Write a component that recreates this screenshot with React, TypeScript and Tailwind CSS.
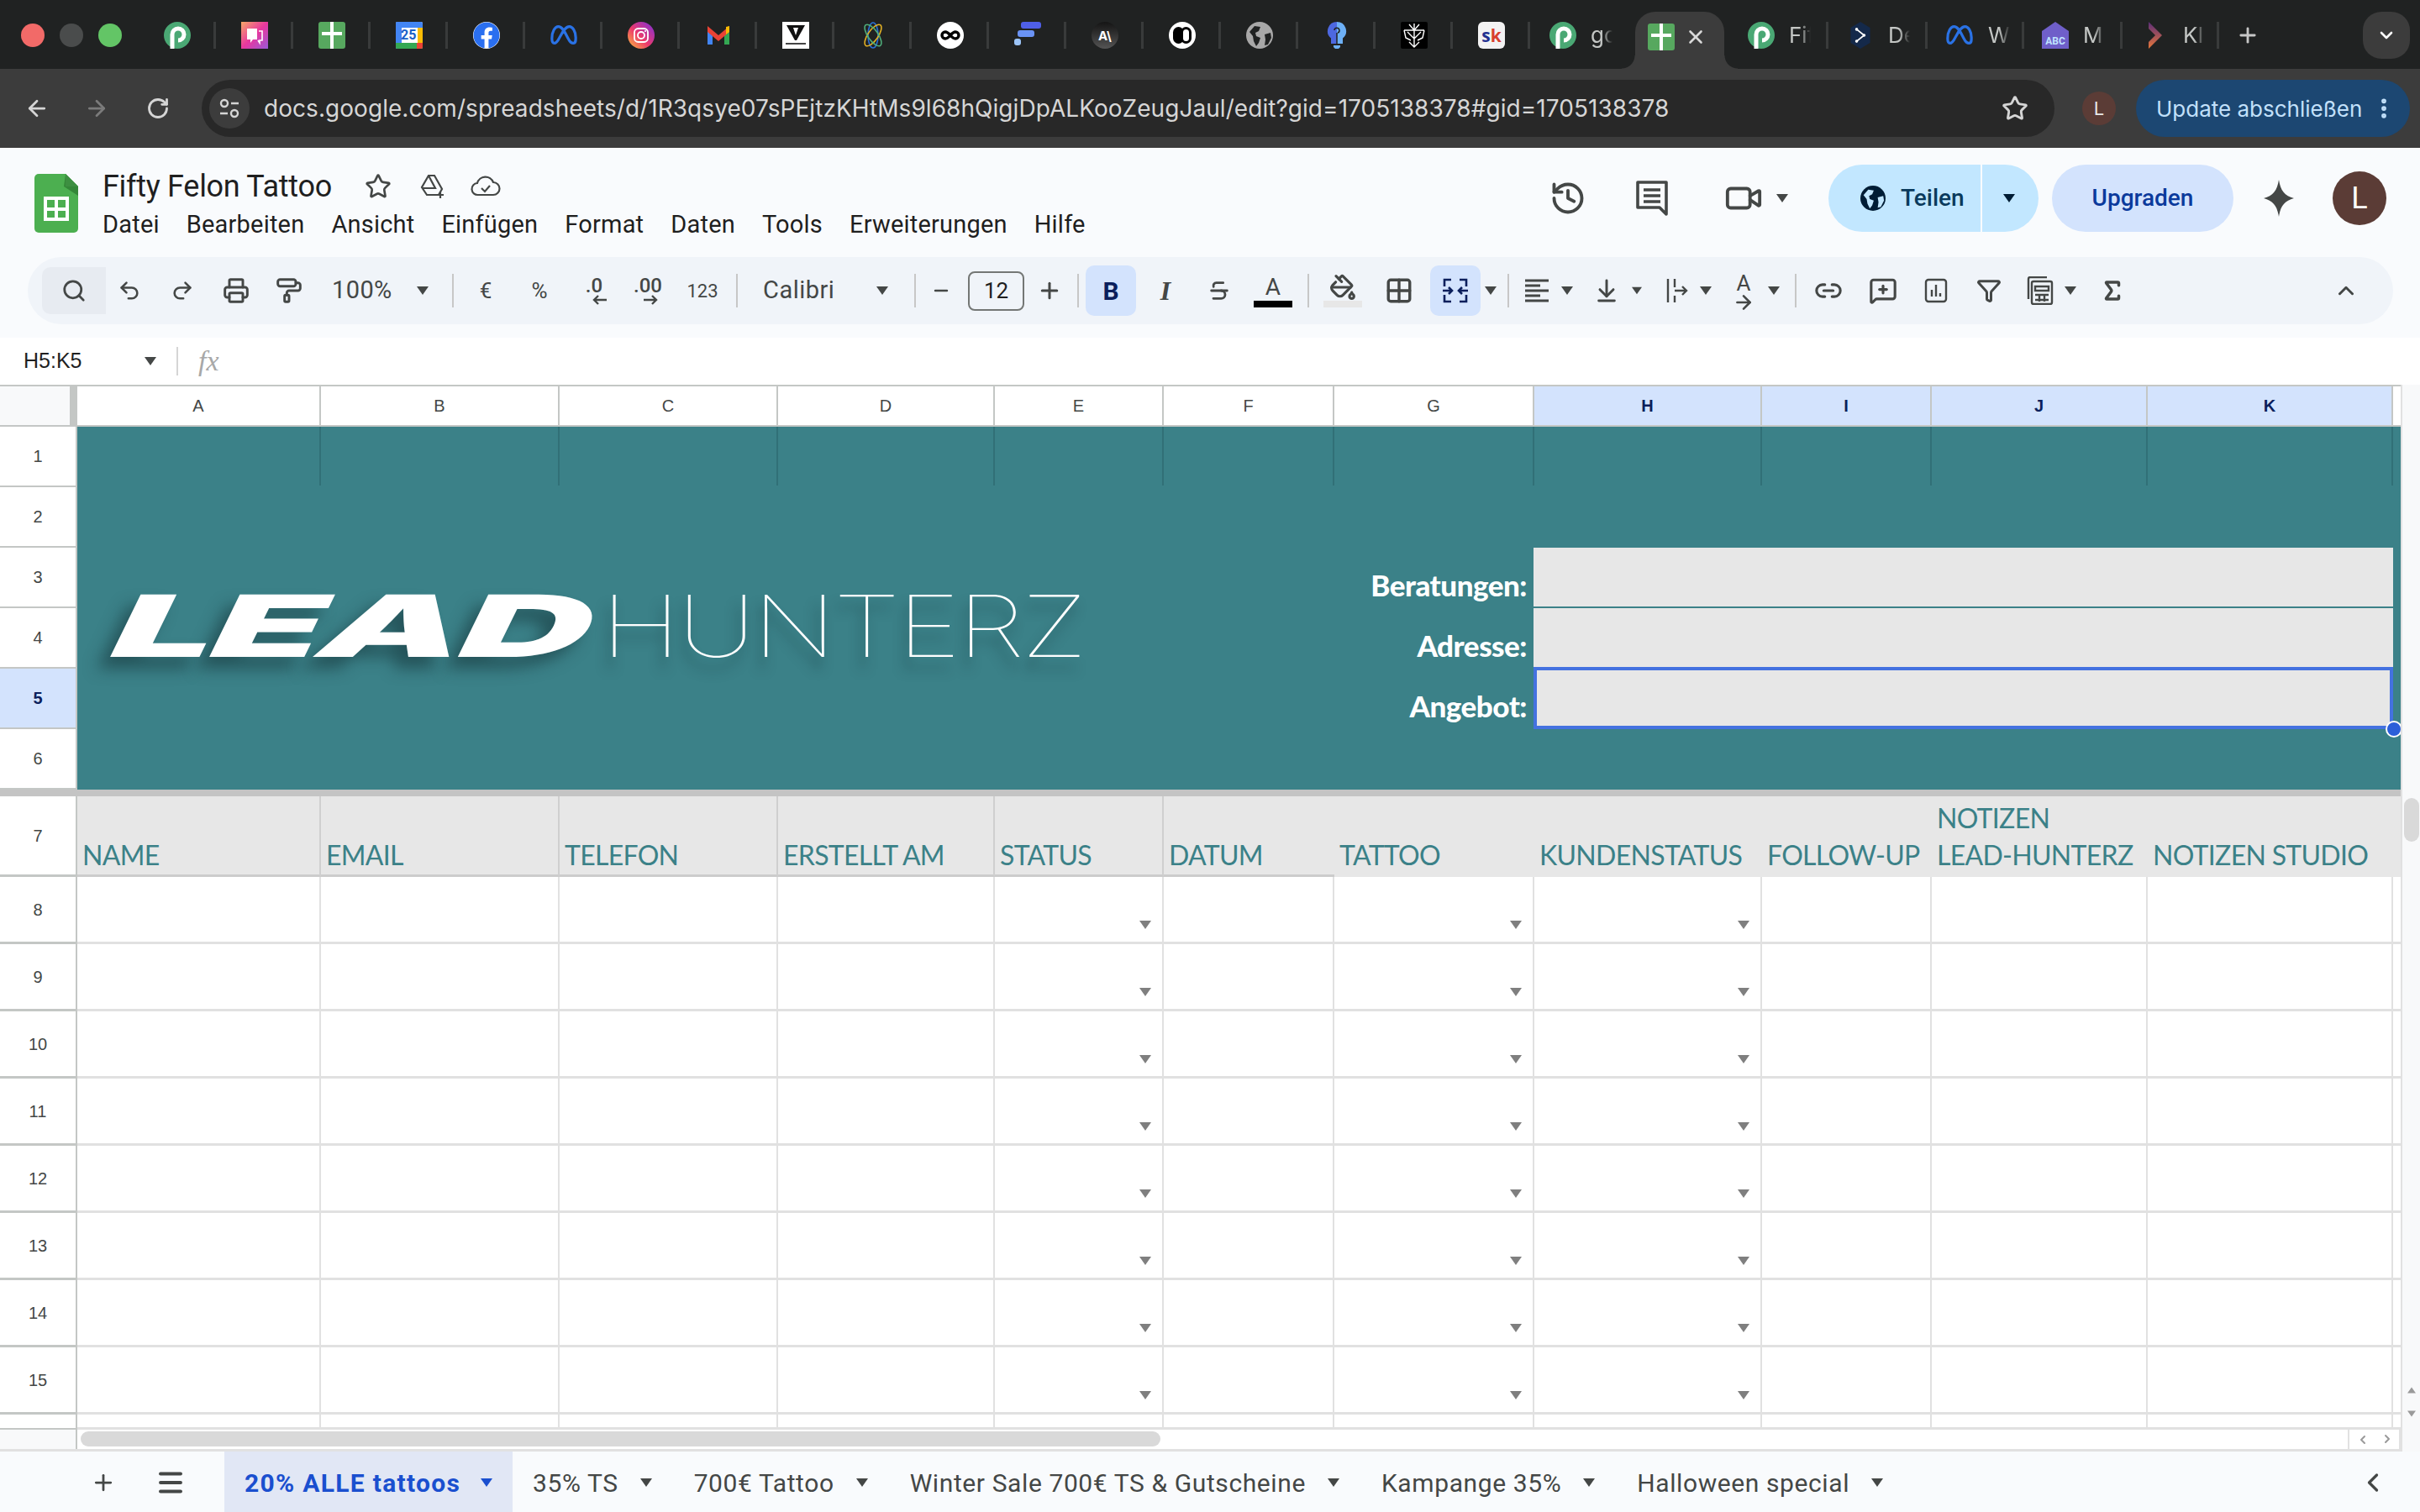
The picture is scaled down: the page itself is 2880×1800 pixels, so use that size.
import type { ReactNode } from 'react'
import {
  ArrowLeft, ArrowRight, RotateCw, Star, Search, Undo2, Redo2, Printer, PaintRoller,
  Minus, Plus, Strikethrough, PaintBucket, Grid2x2, ArrowDownToLine, Link2,
  MessageSquarePlus, Funnel, Sigma, ChevronUp, ChevronDown, ChevronLeft, History, Video,
  X, Menu, Infinity as InfinityIcon, EllipsisVertical, ArrowRight as Arrow,
} from 'lucide-react'
import { FaFacebook } from 'react-icons/fa'

const ROWS = [8, 9, 10, 11, 12, 13, 14, 15]
const COLS = ['A', 'B', 'C', 'D', 'E', 'F', 'G', 'H', 'I', 'J', 'K']
const SELECTED_COLS = ['H', 'I', 'J', 'K']
const DROPDOWN_COLS = ['E', 'G', 'H']
const SHEET_GRID = 'grid shrink-0 grid-cols-[92px_290px_284px_260px_258px_201px_203px_238px_271px_202px_257px_292px_9px]'

function Caret({ className = 'text-[#444746]' }: { className?: string }) {
  return (
    <svg viewBox="0 0 14 10" className={`w-[14px] h-[10px] ${className}`} aria-hidden="true">
      <path d="M0 0h14L7 10z" fill="currentColor" />
    </svg>
  )
}

function SolidGlobe({ size, bg, fg }: { size: string; bg: string; fg: string }) {
  return (
    <svg viewBox="0 0 32 32" className={size}>
      <circle cx="16" cy="16" r="16" fill={bg} />
      <path d="M4 12l6-7 7 1-2 5-4 2 1 4 5 2-2 6-3 4-3-6-1-6zM22 15l7-2 1 6-4 8-4 1 1-7z" fill={fg} />
    </svg>
  )
}

/* ---- favicons ---- */
function PIcon() {
  return (
    <svg viewBox="0 0 32 32" className="w-8 h-8 shrink-0">
      <circle cx="16" cy="16" r="16" fill="#4aa874" />
      <path d="M10 32V15a7 7 0 1 1 7 7" fill="none" stroke="#fff" strokeWidth="5" />
    </svg>
  )
}
function SheetsFav() {
  return (
    <div className="w-8 h-8 shrink-0 rounded-[3px] bg-[#57a85f] relative">
      <div className="absolute left-[14px] top-0 w-1 h-full bg-white" />
      <div className="absolute left-1 right-1 top-[12px] h-1 bg-white" />
    </div>
  )
}
function MetaIcon() {
  return (
    <svg viewBox="0 0 36 32" className="w-[34px] h-8 shrink-0" fill="none" stroke="#2a72e5" strokeWidth="3.4">
      <path d="M3 20C3 11 7 5 11 5c6 0 9 9 13 16 2 4 4 5 6 5 3 0 3-3 3-7 0-8-4-14-8-14-6 0-10 10-13 15-2 4-4 6-6 6-3 0-3-3-3-6z" />
    </svg>
  )
}
function Fav({ children }: { children: ReactNode }) {
  return <div className="w-[92px] h-8 shrink-0 flex items-center justify-center pl-[3px] relative border-r-[3px] border-[#393b3b]">{children}</div>
}

function Favicons() {
  return (
    <>
      <Fav><PIcon /></Fav>
      <Fav>
        <svg viewBox="0 0 32 32" className="w-8 h-8">
          <defs>
            <linearGradient id="chat" x1="0" y1="0" x2="1" y2="1">
              <stop offset="0" stopColor="#f7a868" /><stop offset=".5" stopColor="#e8379e" /><stop offset="1" stopColor="#9a5ad8" />
            </linearGradient>
          </defs>
          <rect width="32" height="32" fill="url(#chat)" />
          <path d="M7 8h12v13h-5l-3 4v-4H7z" fill="#fff" />
          <path d="M21 11h4v11h-3v3l-2-3" fill="none" stroke="#fff" strokeWidth="1.6" />
        </svg>
      </Fav>
      <Fav><SheetsFav /></Fav>
      <Fav>
        <div className="w-8 h-8 relative bg-white rounded-[2px] overflow-hidden">
          <div className="absolute inset-x-0 top-0 h-[7px] bg-[#4285f4]" />
          <div className="absolute left-0 top-0 bottom-0 w-[7px] bg-[#4285f4]" />
          <div className="absolute right-0 top-[7px] bottom-[7px] w-[6px] bg-[#fbbc04]" />
          <div className="absolute inset-x-0 bottom-0 h-[7px] bg-[#34a853]" />
          <div className="absolute right-0 bottom-0 w-[7px] h-[7px] bg-[#ea4335]" />
          <span className="absolute left-[6px] top-[6px] text-[16px] leading-[20px] font-bold text-[#1a5fc8] font-['Roboto']">25</span>
        </div>
      </Fav>
      <Fav><FaFacebook className="w-8 h-8 text-[#2a6ff0] bg-white rounded-full" /></Fav>
      <Fav><MetaIcon /></Fav>
      <Fav>
        <svg viewBox="0 0 32 32" className="w-8 h-8">
          <defs>
            <linearGradient id="ig" x1="0" y1="1" x2="1" y2="0">
              <stop offset="0" stopColor="#fdc13c" /><stop offset=".45" stopColor="#ec3a6b" /><stop offset="1" stopColor="#7a2ee0" />
            </linearGradient>
          </defs>
          <circle cx="16" cy="16" r="16" fill="url(#ig)" />
          <rect x="8" y="8" width="16" height="16" rx="4.5" fill="none" stroke="#fff" strokeWidth="1.8" />
          <circle cx="16" cy="16" r="4" fill="none" stroke="#fff" strokeWidth="1.8" />
          <circle cx="21" cy="11" r="1.1" fill="#fff" />
        </svg>
      </Fav>
      <Fav>
        <svg viewBox="0 0 32 32" className="w-8 h-8">
          <path d="M3 8v19h6V13z" fill="#4285f4" />
          <path d="M23 13v14h6V8z" fill="#34a853" />
          <path d="M3 5l13 11L29 5v7l-13 11L3 12z" fill="#ea4335" />
          <path d="M25 6l4-1v7l-4 3z" fill="#fbbc04" />
        </svg>
      </Fav>
      <Fav>
        <div className="w-8 h-8 bg-white flex flex-col items-center pt-1">
          <svg viewBox="0 0 24 18" className="w-6 h-[18px]"><path d="M1 0h22L13 18h-2z" fill="#111" /><path d="M9 3h6l-3 9z" fill="#fff" /></svg>
          <div className="w-6 h-[2px] mt-[3px] bg-[#444]" />
        </div>
      </Fav>
      <Fav>
        <svg viewBox="0 0 32 32" className="w-8 h-8" fill="none" strokeWidth="1.6">
          <ellipse cx="16" cy="16" rx="6" ry="15" stroke="#2a6fd6" />
          <ellipse cx="16" cy="16" rx="6" ry="15" stroke="#e2b125" transform="rotate(35 16 16)" />
          <ellipse cx="16" cy="16" rx="6" ry="15" stroke="#4fae7b" transform="rotate(-35 16 16)" />
        </svg>
      </Fav>
      <Fav>
        <div className="w-8 h-8 bg-white rounded-full flex items-center justify-center">
          <InfinityIcon size={24} strokeWidth={3.4} className="text-black" />
        </div>
      </Fav>
      <Fav>
        <div className="w-8 h-8 flex flex-col gap-[2px]">
          <div className="w-6 h-2 ml-2 rounded-[3px] bg-[#4f5fe8]" />
          <div className="w-5 h-2 ml-1 rounded-[3px] bg-[#6a93f5]" />
          <div className="w-2 h-2 rounded-[3px] bg-[#9cc4f7]" />
        </div>
      </Fav>
      <Fav>
        <div className="w-8 h-8 rounded-full bg-gradient-to-b from-[#151515] to-[#555] flex items-center justify-center text-white text-[15px] leading-none font-bold font-['Inter']">A\</div>
      </Fav>
      <Fav>
        <div className="w-8 h-8 rounded-full bg-white relative overflow-hidden">
          <div className="absolute left-[5px] top-[6px] w-[13px] h-5 rounded-full bg-black" />
          <div className="absolute right-[5px] top-[6px] w-[13px] h-5 rounded-full border-[3px] border-black bg-white" />
        </div>
      </Fav>
      <Fav><SolidGlobe size="w-8 h-8" bg="#a8a8a8" fg="#202222" /></Fav>
      <Fav>
        <svg viewBox="0 0 32 32" className="w-8 h-8">
          <path d="M16 0a11 11 0 0 1 7 19.5V26h-7z" fill="#6db0f6" />
          <path d="M16 0a11 11 0 0 0-7 19.5V26h7z" fill="#4d68e0" />
          <path d="M12 28h8v2l-2 2h-4l-2-2z" fill="#6db0f6" />
          <path d="M16 26V13m-3-3a3 3 0 1 1 4 3" fill="none" stroke="#202222" strokeWidth="1.5" />
        </svg>
      </Fav>
      <Fav>
        <svg viewBox="0 0 32 32" className="w-8 h-8 bg-black rounded-[2px]" fill="none" stroke="#fff" strokeWidth="1.4">
          <path d="M16 2v28M10 3l6 7 6-7M4 10l12 0 12 0M4 10l2 9 6 3M28 10l-2 9-6 3M10 24l6 6 6-6M8 12l8 8 8-8" />
        </svg>
      </Fav>
      <Fav>
        <div className="w-8 h-8 rounded-[6px] bg-[#f3f3f3] flex items-center justify-center text-[21px] leading-none font-bold font-['Open_Sans']">
          <span className="text-[#22308f]">s</span><span className="text-[#d8402f]">k</span>
        </div>
      </Fav>
    </>
  )
}

function StripTab({ icon, label, className, sep = true }: { icon: ReactNode; label: string; className: string; sep?: boolean }) {
  return (
    <div className={`h-8 shrink-0 flex items-center ${sep ? 'border-r-[3px] border-[#393b3b]' : ''} ${className}`}>
      {icon}
      <span className="ml-[17px] w-[26px] overflow-hidden whitespace-nowrap text-[26px] leading-8 text-[#c4c7c5] font-['Inter'] [mask-image:linear-gradient(to_right,black_50%,transparent)]">{label}</span>
    </div>
  )
}

function TabStrip() {
  return (
    <div className="h-[82px] shrink-0 bg-[#202222] flex relative">
      <div className="flex items-center gap-[18px] pl-[25px] w-[165px] shrink-0 h-[84px]">
        <div className="w-7 h-7 rounded-full bg-[#f26a68]" />
        <div className="w-7 h-7 rounded-full bg-[#4a4c4c]" />
        <div className="w-7 h-7 rounded-full bg-[#63c566]" />
      </div>
      <div className="flex items-center h-[84px]">
        <Favicons />
        <StripTab icon={<PIcon />} label="go" className="w-[125px] pl-[23px]" sep={false} />
        {/* active tab */}
        <div className="relative w-[106px] h-[68px] mt-[14px] self-start rounded-t-[24px] bg-[#3c3c3c] flex items-center pl-[15px] pb-[8px]">
          <SheetsFav />
          <X size={26} strokeWidth={2.4} className="ml-[12px] text-[#d8d8d8]" />
          <span className="absolute -left-4 bottom-0 w-4 h-4 bg-[radial-gradient(circle_at_0_0,#202222_15px,#3c3c3c_16px)]" />
          <span className="absolute -right-4 bottom-0 w-4 h-4 bg-[radial-gradient(circle_at_100%_0,#202222_15px,#3c3c3c_16px)]" />
        </div>
        <StripTab icon={<PIcon />} label="Fif" className="w-[124px] pl-[28px]" />
        <StripTab
          icon={
            <svg viewBox="0 0 32 36" className="w-8 h-8 shrink-0">
              <path d="M16 0l13 8v20l-13 8-13-8V8z" fill="#14294a" />
              <path d="M11 10l10 8-10 8" fill="none" stroke="#fff" strokeWidth="2" />
              <circle cx="11" cy="10" r="2" fill="#fff" /><circle cx="21" cy="18" r="2" fill="#fff" /><circle cx="11" cy="26" r="2" fill="#fff" />
            </svg>
          }
          label="De"
          className="w-[118px] pl-[22px]"
        />
        <StripTab icon={<MetaIcon />} label="W" className="w-[115px] pl-[21px]" />
        <StripTab
          icon={
            <svg viewBox="0 0 32 32" className="w-8 h-8 shrink-0">
              <path d="M16 0l16 11v21H0V11z" fill="#6f5fc9" />
              <text x="16" y="27" fontSize="12" fontWeight="700" textAnchor="middle" fill="#bfe3ff" fontFamily="Roboto">ABC</text>
            </svg>
          }
          label="M"
          className="w-[117px] pl-[21px]"
        />
        <StripTab
          icon={
            <svg viewBox="0 0 32 32" className="w-8 h-8 shrink-0">
              <defs>
                <linearGradient id="ki" x1="0" y1="0" x2="0" y2="1">
                  <stop offset="0" stopColor="#5a2d7a" /><stop offset="1" stopColor="#e8773a" />
                </linearGradient>
              </defs>
              <path d="M8 0l16 16L8 32V24l8-8-8-8z" fill="url(#ki)" />
            </svg>
          }
          label="KI"
          className="w-[115px] pl-[23px]"
        />
        <Plus size={28} strokeWidth={2.4} className="ml-[20px] text-[#c7c7c7]" />
      </div>
      <div className="absolute right-3 top-[14px] w-14 h-14 rounded-[22px] bg-[#3c3c3c] flex items-center justify-center">
        <ChevronDown size={24} strokeWidth={2.6} className="text-white" />
      </div>
    </div>
  )
}

function Omnibox() {
  return (
    <div className="h-[94px] shrink-0 bg-[#3c3c3c] flex items-center pr-3 text-[#c7c7c7]">
      <div className="w-[240px] shrink-0 flex items-center">
        <ArrowLeft size={30} strokeWidth={2.2} className="ml-[29px] text-[#d5d5d5]" />
        <ArrowRight size={30} strokeWidth={2.2} className="ml-[41px] text-[#7b7b7b]" />
        <RotateCw size={28} strokeWidth={2.4} className="ml-[44px] text-[#d5d5d5]" />
      </div>
      <div className="w-[2205px] h-[68px] -mt-[1px] shrink-0 rounded-full bg-[#282828] flex items-center pl-[9px]">
        <div className="w-12 h-12 rounded-full bg-[#3c3c3c] flex items-center justify-center">
          <svg viewBox="0 0 26 26" className="w-[26px] h-[26px] text-[#d5d5d5]" fill="none" stroke="currentColor" strokeWidth="2.4">
            <circle cx="7" cy="7" r="4" />
            <path d="M15 7h9M2 19h9" />
            <circle cx="19" cy="19" r="4" />
          </svg>
        </div>
        <span className="ml-[17px] text-[28px] tracking-[0.05px] text-[#d6d6d6] font-['Inter'] whitespace-nowrap">
          docs.google.com/spreadsheets/d/1R3qsye07sPEjtzKHtMs9l68hQigjDpALKooZeugJaul/edit?gid=1705138378#gid=1705138378
        </span>
        <Star size={32} strokeWidth={2.2} className="ml-auto mr-[31px] text-[#d5d5d5]" />
      </div>
      <div className="ml-[33px] w-10 h-10 rounded-full bg-[#5b3c36] text-[#e8e8e8] text-[22px] flex items-center justify-center font-['Inter']">L</div>
      <div className="ml-[24px] w-[326px] h-[68px] rounded-full bg-[#1c4772] flex items-center pl-6 text-[#c2e0fa] font-['Inter'] text-[26px] whitespace-nowrap">
        Update abschließen
        <EllipsisVertical size={30} strokeWidth={2.6} className="ml-auto mr-[16px]" />
      </div>
    </div>
  )
}

function DocsLogo() {
  return (
    <svg viewBox="0 0 52 70" className="w-[52px] h-[70px] shrink-0">
      <path d="M5 0h32l15 15v50a5 5 0 0 1-5 5H5a5 5 0 0 1-5-5V5a5 5 0 0 1 5-5z" fill="#4caf50" />
      <path d="M37 0l15 15v11L35 15z" fill="#2e7d32" opacity=".8" />
      <path d="M37 0v15h15z" fill="#3d8f41" />
      <path d="M11 27h30v29H11zm4 4v9h9v-9zm13 0v9h9v-9zm-13 13v8h9v-8zm13 0v8h9v-8z" fill="#fff" fillRule="evenodd" />
    </svg>
  )
}

function DocHeader() {
  return (
    <div className="h-[130px] flex items-start pl-[41px] text-[#444746]">
      <div className="pt-[31px]"><DocsLogo /></div>
      <div className="ml-[29px] pt-[24px] font-['Roboto']">
        <div className="flex items-center h-[44px]">
          <span className="text-[36px] leading-[44px] tracking-[-0.3px] text-[#1f1f1f] whitespace-nowrap">Fifty Felon Tattoo</span>
          <Star size={32} strokeWidth={2} className="ml-[39px]" />
          <svg viewBox="0 0 32 32" className="ml-[32px] w-8 h-8" fill="none" stroke="currentColor" strokeWidth="2.2">
            <path d="M12 3h7l9 16-4 7H10l-6-9z" />
            <path d="M12 3l8 15H5" />
            <path d="M26 22v8m-4-4h8" stroke="currentColor" />
          </svg>
          <svg viewBox="0 0 36 32" className="ml-[30px] w-9 h-8" fill="none" stroke="currentColor" strokeWidth="2.2">
            <path d="M9 26a7 7 0 0 1-1-14 10 10 0 0 1 19-1 7.5 7.5 0 0 1 0 15z" />
            <path d="M13 18l4 4 6-7" />
          </svg>
        </div>
        <div className="flex gap-[32px] mt-[2px] text-[29px] leading-[42px] tracking-[0.2px] text-[#1f1f1f] whitespace-nowrap">
          {['Datei', 'Bearbeiten', 'Ansicht', 'Einfügen', 'Format', 'Daten', 'Tools', 'Erweiterungen', 'Hilfe'].map((m) => (
            <span key={m}>{m}</span>
          ))}
        </div>
      </div>

      {/* right side actions */}
      <div className="ml-auto mt-[20px] mr-[40px] h-20 flex items-center">
        <History size={44} strokeWidth={2.1} />
        <svg viewBox="0 0 40 44" className="ml-[58px] w-10 h-11" fill="none" stroke="currentColor" strokeWidth="3.6">
          <path d="M3 3h34v38l-8-8H3z" strokeLinejoin="round" />
          <path d="M10 12h20M10 19h20M10 26h20" />
        </svg>
        <Video size={46} strokeWidth={2} className="ml-[66px]" />
        <Caret className="ml-[16px] text-[#444746]" />
        <div className="ml-[48px] w-[250px] h-20 rounded-full bg-[#c2e7ff] flex items-center text-[#0a3a5c] font-['Roboto'] font-medium text-[28px]">
          <div className="w-[183px] h-full flex items-center pl-[38px] border-r-2 border-[#f9fbfd]">
            <SolidGlobe size="w-[30px] h-[30px]" bg="#001d35" fg="#c2e7ff" />
            <span className="ml-[18px]">Teilen</span>
          </div>
          <Caret className="ml-[25px] text-[#001d35]" />
        </div>
        <div className="ml-4 w-[216px] h-20 rounded-full bg-[#d3e3fd] flex items-center justify-center text-[#0b3a9c] font-['Roboto'] font-medium text-[28px]">Upgraden</div>
        <svg viewBox="0 0 36 44" className="ml-[36px] w-9 h-11"><path d="M18 0c2 13 7 19 18 22-11 3-16 9-18 22-2-13-7-19-18-22 11-3 16-9 18-22z" fill="#444746" /></svg>
        <div className="ml-[46px] w-16 h-16 rounded-full bg-[#5b3c36] text-white text-[36px] font-['Roboto'] flex items-center justify-center">L</div>
      </div>
    </div>
  )
}

function Cell({ className, children }: { className: string; children?: ReactNode }) {
  return <div className={`h-full shrink-0 flex items-center justify-center ${className}`}>{children}</div>
}
function Sep({ className }: { className: string }) {
  return (
    <div className={`h-full shrink-0 flex items-center justify-center ${className}`}>
      <div className="w-[2px] h-10 bg-[#c7c7c7]" />
    </div>
  )
}

function Toolbar() {
  const ico = 'text-[#444746]'
  return (
    <div className="ml-[33px] w-[2815px] h-20 rounded-[40px] bg-[#f0f4f9] flex items-center pl-[17px] pr-[32px] text-[#444746] font-['Roboto']">
      <Cell className="w-[76px] !h-14 rounded-l-[10px] bg-[#e7ebf1]"><Search size={30} strokeWidth={2.2} className={ico} /></Cell>
      <Cell className="w-[56px]"><Undo2 size={28} strokeWidth={2.2} className={ico} /></Cell>
      <Cell className="w-[70px]"><Redo2 size={28} strokeWidth={2.2} className={ico} /></Cell>
      <Cell className="w-[58px]"><Printer size={32} strokeWidth={2.2} className={ico} /></Cell>
      <Cell className="w-[68px]"><PaintRoller size={32} strokeWidth={2.2} className={ico} /></Cell>
      <Cell className="w-[112px] !justify-start pl-[17px] text-[29px] tracking-[0.4px]">100%</Cell>
      <Cell className="w-[26px]"><Caret /></Cell>
      <Sep className="w-[46px]" />
      <Cell className="w-[32px] text-[26px]">€</Cell>
      <Cell className="w-[96px] text-[26px]">%</Cell>
      <Cell className="w-[34px] flex-col text-[24px] leading-[22px] font-medium">
        <span>.0</span>
        <svg viewBox="0 0 18 12" className="w-[18px] h-3 ml-3"><path d="M18 6H3m5-5L3 6l5 5" fill="none" stroke="currentColor" strokeWidth="2.4" /></svg>
      </Cell>
      <Cell className="w-[94px] flex-col text-[24px] leading-[22px] font-medium">
        <span>.00</span>
        <svg viewBox="0 0 18 12" className="w-[18px] h-3 ml-2"><path d="M0 6h15m-5-5 5 5-5 5" fill="none" stroke="currentColor" strokeWidth="2.4" /></svg>
      </Cell>
      <Cell className="w-[36px] text-[22px]">123</Cell>
      <Sep className="w-[46px]" />
      <Cell className="w-[130px] !justify-start pl-[8px] text-[29px] tracking-[0.5px]">Calibri</Cell>
      <Cell className="w-[40px]"><Caret /></Cell>
      <Sep className="w-[38px]" />
      <Cell className="w-[24px]"><Minus size={30} strokeWidth={2.4} className={ico} /></Cell>
      <div className="ml-5 w-[67px] h-[47px] shrink-0 rounded-[8px] border-2 border-[#747775] flex items-center justify-center text-[26px] text-[#1f1f1f]">12</div>
      <Cell className="w-[60px]"><Plus size={30} strokeWidth={2.4} className={ico} /></Cell>
      <Sep className="w-[8px]" />
      <Cell className="ml-[5px] w-[60px] !h-[60px] rounded-[10px] bg-[#d3e3fd] text-[30px] font-bold text-[#0b1f5c]">B</Cell>
      <Cell className="w-[70px] text-[32px] font-bold italic font-['Liberation_Serif']">I</Cell>
      <Cell className="w-[58px]"><Strikethrough size={28} strokeWidth={2.4} className={ico} /></Cell>
      <Cell className="w-[70px] flex-col">
        <span className="text-[28px] leading-[32px]">A</span>
        <div className="w-[46px] h-2 bg-black" />
      </Cell>
      <Sep className="w-[14px]" />
      <Cell className="w-[68px] flex-col">
        <PaintBucket size={32} strokeWidth={2.4} className={ico} />
        <div className="w-[46px] h-2 bg-[#e7e7e7]" />
      </Cell>
      <Cell className="w-[66px]"><Grid2x2 size={34} strokeWidth={2.4} className={ico} /></Cell>
      <Cell className="ml-1 w-[60px] !h-[60px] rounded-[10px] bg-[#d3e3fd]">
        <svg viewBox="0 0 32 32" className="w-8 h-8 text-[#0b1f5c]" fill="none" stroke="currentColor" strokeWidth="2.6">
          <path d="M11 3H3v8M21 3h8v8M11 29H3v-8M21 29h8v-8" />
          <path d="M1 16h11m-4-4 4 4-4 4M31 16H20m4-4-4 4 4 4" />
        </svg>
      </Cell>
      <Cell className="w-[24px]"><Caret /></Cell>
      <Sep className="w-[18px]" />
      <Cell className="w-[50px]">
        <svg viewBox="0 0 30 30" className="w-[30px] h-[30px]" fill="none" stroke="currentColor" strokeWidth="3">
          <path d="M1 3h28M1 9h18M1 15h28M1 21h18M1 27h28" />
        </svg>
      </Cell>
      <Cell className="w-[22px]"><Caret /></Cell>
      <Cell className="ml-[6px] w-[60px]"><ArrowDownToLine size={32} strokeWidth={2.2} className={ico} /></Cell>
      <Cell className="w-[12px]"><Caret /></Cell>
      <Cell className="ml-[15px] w-[50px]">
        <svg viewBox="0 0 32 32" className="w-8 h-8" fill="none" stroke="currentColor" strokeWidth="2.4">
          <path d="M7 2v28M15 2v10M15 22v8M15 16h14m-5-5 5 5-5 5" />
        </svg>
      </Cell>
      <Cell className="w-[22px]"><Caret /></Cell>
      <Cell className="ml-[9px] w-[50px] flex-col text-[26px] leading-[24px]">
        <span>A</span>
        <Arrow size={26} strokeWidth={2.4} className="-mt-[2px] -mb-[6px]" />
      </Cell>
      <Cell className="w-[22px]"><Caret /></Cell>
      <Sep className="w-[30px]" />
      <Cell className="w-[48px]"><Link2 size={34} strokeWidth={2.2} className={ico} /></Cell>
      <Cell className="w-[82px]"><MessageSquarePlus size={34} strokeWidth={2.2} className={ico} /></Cell>
      <Cell className="w-[44px]">
        <svg viewBox="0 0 32 32" className="w-8 h-8" fill="none" stroke="currentColor" strokeWidth="2.4">
          <rect x="4" y="3" width="24" height="26" rx="3" />
          <path d="M11 23v-8M16 23V9M21 23v-4" />
        </svg>
      </Cell>
      <Cell className="w-[82px]"><Funnel size={30} strokeWidth={2.4} className={ico} /></Cell>
      <Cell className="w-[40px]">
        <svg viewBox="0 0 32 34" className="w-8 h-[34px]" fill="none" stroke="currentColor" strokeWidth="2.4">
          <path d="M2 27V3a2 2 0 0 1 2-2h20" />
          <rect x="6" y="6" width="24" height="27" rx="2" />
          <path d="M10 12h16v5H10zM10 22h16M10 28h16M15 22v8M21 22v8" />
        </svg>
      </Cell>
      <Cell className="w-[32px]"><Caret /></Cell>
      <Cell className="w-[68px]"><Sigma size={30} strokeWidth={2.8} className={ico} /></Cell>
      <Cell className="ml-auto w-[48px]"><ChevronUp size={30} strokeWidth={2.4} className={ico} /></Cell>
    </div>
  )
}

function FormulaBar() {
  return (
    <div className="h-[56px] shrink-0 bg-white flex items-center font-['Liberation_Sans'] text-[#1f1f1f]">
      <span className="ml-[28px] w-[144px] text-[25px]">H5:K5</span>
      <Caret />
      <div className="ml-[24px] w-[2px] h-[34px] bg-[#d5d5d5]" />
      <span className="ml-[24px] text-[34px] leading-[40px] italic text-[#a8a8a8] font-['Liberation_Serif']">fx</span>
    </div>
  )
}

function RowHead({ n, className = '' }: { n: number; className?: string }) {
  return (
    <div className={`w-[92px] shrink-0 flex items-center justify-center border-r-2 border-b-2 border-[#c4c7c5] text-[20px] text-[#444746] font-['Liberation_Sans'] ${className}`}>
      {n}
    </div>
  )
}

function ColumnHeader() {
  return (
    <div className={`${SHEET_GRID} h-[50px] border-t-2 border-b-2 border-[#c4c7c5]`}>
      <div className="bg-[#f8f9fa] border-r-[9px] border-[#c4c7c5]" />
      {COLS.map((c) => {
        const sel = SELECTED_COLS.includes(c)
        return (
          <div
            key={c}
            className={`flex items-center justify-center border-r-2 border-[#c4c7c5] text-[20px] font-['Liberation_Sans'] ${sel ? 'bg-[#d3e3fd] text-[#0b1f5c] font-bold' : 'text-[#444746]'}`}
          >
            {c}
          </div>
        )
      })}
      <div />
    </div>
  )
}

function Field({ label, selected = false }: { label: string; selected?: boolean }) {
  return (
    <div className="h-[72px] flex">
      <div className="w-[1733px] shrink-0 h-full flex items-end justify-end pr-2 pb-[4px] text-white font-black text-[35px] leading-[48px] font-['Lato'] tracking-[-0.5px]">
        {label}
      </div>
      {selected ? (
        <div className="relative w-[1023px] h-[74px] -mt-[2px] bg-[#e7e7e7] border-4 border-[#4472e0]">
          <div className="absolute -right-[15px] -bottom-[14px] w-5 h-5 rounded-full bg-[#2b5fd9] border-2 border-white" />
        </div>
      ) : (
        <div className="w-[1023px] h-[70px] bg-[#e7e7e7]" />
      )}
    </div>
  )
}

function Logo() {
  return (
    <div className="absolute left-[47px] top-[177px] h-[120px] flex items-center text-white whitespace-nowrap [text-shadow:-4px_14px_12px_rgba(20,50,55,0.55)]">
      <span className="inline-block origin-left w-[576px] scale-x-[2.12] skew-x-[-13deg] text-[102px] leading-[120px] font-black font-['Inter'] tracking-[-2px]">LEAD</span>
      <span className="inline-block origin-left w-[557px] scale-x-[1.27] text-[102px] leading-[120px] font-thin font-['Inter'] tracking-[-3px]">HUNTERZ</span>
    </div>
  )
}

function Banner() {
  return (
    <div className="flex h-[432px] shrink-0">
      <div className="w-[92px] shrink-0 flex flex-col">
        {[1, 2, 3, 4, 5, 6].map((n) => (
          <RowHead
            key={n}
            n={n}
            className={`h-[72px] ${n === 5 ? 'bg-[#d3e3fd] !text-[#0b1f5c] font-bold' : ''}`}
          />
        ))}
      </div>
      <div className="relative w-[2765px] h-full overflow-hidden bg-[#3b8188]">
        <div className="h-[72px] grid grid-cols-[290px_284px_260px_258px_201px_203px_238px_271px_202px_257px_292px]">
          {COLS.map((c) => (
            <div key={c} className="h-[70px] border-r-2 border-[#317077]" />
          ))}
        </div>
        <div className="h-[72px]" />
        <Field label="Beratungen:" />
        <Field label="Adresse:" />
        <Field label="Angebot:" selected />
        <Logo />
      </div>
    </div>
  )
}

function HeaderRow() {
  const cells: { label: ReactNode; line?: boolean }[] = [
    { label: 'NAME', line: true },
    { label: 'EMAIL', line: true },
    { label: 'TELEFON', line: true },
    { label: 'ERSTELLT AM', line: true },
    { label: 'STATUS', line: true },
    { label: 'DATUM' },
    { label: 'TATTOO' },
    { label: 'KUNDENSTATUS' },
    { label: 'FOLLOW-UP' },
    { label: <>NOTIZEN<br />LEAD-HUNTERZ</> },
    { label: 'NOTIZEN STUDIO' },
  ]
  return (
    <div className={`${SHEET_GRID} h-[96px]`}>
      <RowHead n={7} className="!w-full !border-b-[3px]" />
      {cells.map((c, i) => (
        <div
          key={i}
          className={`flex items-end bg-[#e7e7e7] pl-[6px] text-[#3b8188] text-[32px] leading-[44px] font-['Lato'] tracking-[-0.7px] whitespace-nowrap ${c.line ? 'border-r-2 border-[#cfcfcf]' : ''} ${i < 6 ? 'border-b-[3px] !border-b-[#cccccc] pb-[1px]' : 'pb-[4px]'}`}
        >
          <span>{c.label}</span>
        </div>
      ))}
      <div className="bg-[#e7e7e7]" />
    </div>
  )
}

function DataRow({ n, partial = false }: { n: number; partial?: boolean }) {
  return (
    <div className={`${SHEET_GRID} ${partial ? 'h-[18px]' : 'h-[80px]'}`}>
      {partial ? (
        <div className="border-r-2 border-b-2 border-[#c4c7c5]" />
      ) : (
        <RowHead n={n} className="!w-full !border-b-[3px]" />
      )}
      {COLS.map((c) => (
        <div key={c} className="relative border-r-2 border-b-[3px] border-[#e1e1e1]">
          {!partial && DROPDOWN_COLS.includes(c) && (
            <Caret className="absolute right-[13px] bottom-[15px] text-[#7f7f7f]" />
          )}
        </div>
      ))}
      <div className="border-b-[3px] border-[#e1e1e1]" />
    </div>
  )
}

function HScroll() {
  return (
    <div className="h-[26px] shrink-0 flex items-start border-b-[3px] border-[#e1e1e1] relative">
      <div className="w-[92px] h-full shrink-0 bg-[#f8f9fa] border-r-2 border-[#c4c7c5]" />
      <div className="ml-[4px] mt-[2px] w-[1285px] h-[18px] rounded-full bg-[#d9d9d9]" />
      <div className="ml-auto h-full flex text-[#9a9a9a]">
        <div className="w-[33px] h-full border-l-2 border-[#e1e1e1] flex items-center justify-center"><ChevronLeft size={16} strokeWidth={3} /></div>
        <div className="w-[30px] h-full border-l-2 border-[#e1e1e1] flex items-center justify-center rotate-180"><ChevronLeft size={16} strokeWidth={3} /></div>
      </div>
    </div>
  )
}

function VScroll() {
  return (
    <div className="w-[23px] shrink-0 flex flex-col bg-[#f8f9fa] border-l-2 border-[#e1e1e1]">
      <div className="mt-[492px] ml-[2px] w-[18px] h-[52px] rounded-full bg-[#d9d9d9]" />
      <div className="mt-auto mb-[40px] flex flex-col items-center gap-[18px] text-[#9a9a9a]">
        <Caret className="rotate-180 !w-[10px] text-[#9a9a9a]" />
        <Caret className="!w-[10px] text-[#9a9a9a]" />
      </div>
    </div>
  )
}

function Sheet() {
  return (
    <div className="flex-1 flex min-h-0 overflow-hidden">
      <div className="w-[2857px] shrink-0 flex flex-col">
        <ColumnHeader />
        <Banner />
        <div className="h-[8px] shrink-0 bg-[#c4c4c4]" />
        <HeaderRow />
        {ROWS.map((n) => <DataRow key={n} n={n} />)}
        <DataRow n={16} partial />
        <HScroll />
      </div>
      <VScroll />
    </div>
  )
}

function SheetTabs() {
  const tabs = ['35% TS', '700€ Tattoo', 'Winter Sale 700€ TS & Gutscheine', 'Kampange 35%', 'Halloween special']
  return (
    <div className="h-[72px] shrink-0 bg-[#f9fbfd] flex items-center pt-[2px] text-[#444746] font-['Roboto'] text-[30px] tracking-[0.6px]">
      <Plus size={30} strokeWidth={2.2} className="ml-[108px]" />
      <Menu size={36} strokeWidth={2.6} className="ml-[47px]" />
      <div className="ml-[46px] w-[343px] h-[72px] -mt-[2px] shrink-0 bg-[#e1e7f5] flex items-center pl-[24px] pt-[2px] text-[#1a4fcf] font-bold tracking-[1.3px]">
        20% ALLE tattoos
        <Caret className="ml-[24px] text-[#1a4fcf]" />
      </div>
      <div className="flex items-center pl-[24px] gap-[50px]">
        {tabs.map((t) => (
          <div key={t} className="flex items-center gap-[26px] whitespace-nowrap">
            {t}
            <Caret />
          </div>
        ))}
      </div>
      <ChevronLeft size={36} strokeWidth={2.2} className="ml-auto mr-[38px]" />
    </div>
  )
}

export default function App() {
  return (
    <div className="w-[2880px] h-[1800px] overflow-hidden flex flex-col bg-white">
      <TabStrip />
      <Omnibox />
      <div className="h-[226px] shrink-0 bg-[#f9fbfd]">
        <DocHeader />
        <Toolbar />
      </div>
      <FormulaBar />
      <Sheet />
      <SheetTabs />
    </div>
  )
}
